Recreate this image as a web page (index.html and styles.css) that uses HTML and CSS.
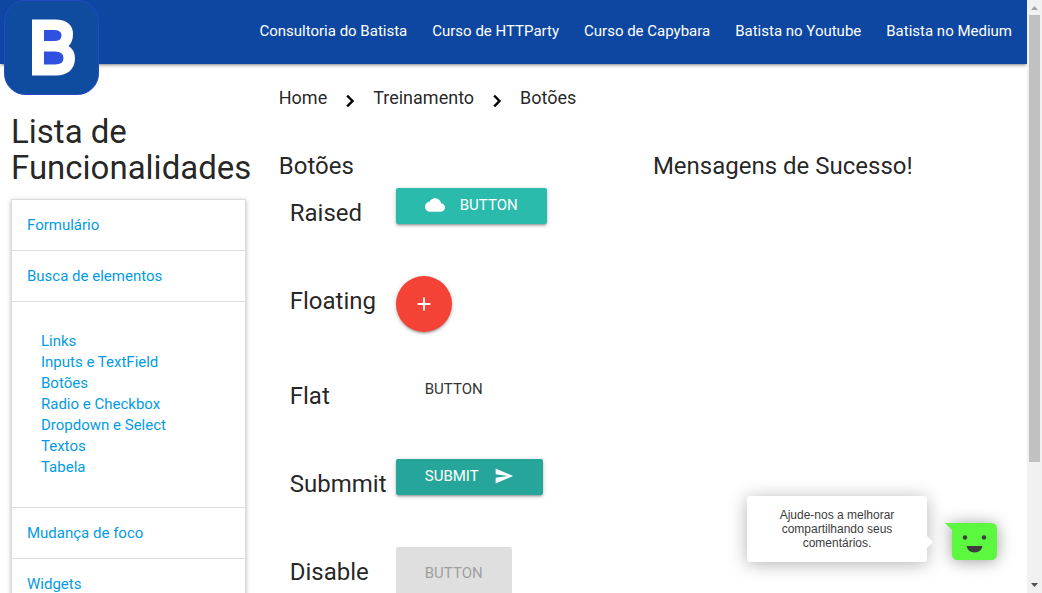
FILE: index.html
```html
<!DOCTYPE html>
<html lang="pt-BR">
<head>
<meta charset="utf-8">
<title>Botões</title>
<link rel="stylesheet" href="styles.css">
</head>
<body>
<div class="page">
  <nav class="navbar">
    <a class="brand" href="#" aria-label="Batista">
      <svg viewBox="0 0 95 95" width="95" height="95" aria-hidden="true">
        <rect x=".5" y=".5" width="94" height="94" rx="21" fill="#0f4c9f" stroke="#2449c9"/>
        <path fill="#fff" d="M28 19.500H51C63 19.500 69 25 69 34Q69 42 64.500 46Q71 50 71 58C71 69 64 75.500 52 75.500H28Z"/>
        <path fill="#3050e0" d="M40 30H50Q57.500 30 57.500 35.500T50 41H40ZM40 51.500H51Q59.500 51.500 59.500 58T51 64.500H40Z"/>
      </svg>
    </a>
    <ul class="nav-links">
      <li><a href="#">Consultoria do Batista</a></li>
      <li><a href="#">Curso de HTTParty</a></li>
      <li><a href="#">Curso de Capybara</a></li>
      <li><a href="#">Batista no Youtube</a></li>
      <li><a href="#">Batista no Medium</a></li>
    </ul>
  </nav>
  <div class="columns">
    <aside class="sidebar">
      <h1 class="sidebar-title">Lista de Funcionalidades</h1>
      <ul class="menu">
        <li><a class="menu-head" href="#">Formulário</a></li>
        <li><a class="menu-head" href="#">Busca de elementos</a>
          <ul class="submenu">
            <li><a href="#">Links</a></li>
            <li><a href="#">Inputs e TextField</a></li>
            <li><a href="#">Botões</a></li>
            <li><a href="#">Radio e Checkbox</a></li>
            <li><a href="#">Dropdown e Select</a></li>
            <li><a href="#">Textos</a></li>
            <li><a href="#">Tabela</a></li>
          </ul>
        </li>
        <li><a class="menu-head" href="#">Mudança de foco</a></li>
        <li><a class="menu-head" href="#">Widgets</a></li>
      </ul>
    </aside>
    <main class="content">
      <div class="crumbs">
        <a href="#">Home</a>
        <svg class="chevron" viewBox="0 0 24 24" aria-hidden="true"><path d="M10 6L8.590 7.410 13.170 12l-4.580 4.590L10 18l6-6z"/></svg>
        <a href="#">Treinamento</a>
        <svg class="chevron" viewBox="0 0 24 24" aria-hidden="true"><path d="M10 6L8.590 7.410 13.170 12l-4.580 4.590L10 18l6-6z"/></svg>
        <a href="#">Botões</a>
      </div>
      <div class="panels">
        <section>
          <h2 class="heading">Botões</h2>
          <div class="demo">
            <h3 class="label">Raised</h3>
            <button class="btn raised" type="button"><svg class="icon" viewBox="0 0 24 24" aria-hidden="true"><path d="M19.350 10.040C18.670 6.590 15.640 4 12 4 9.110 4 6.600 5.640 5.350 8.040 2.340 8.360 0 10.910 0 14c0 3.310 2.690 6 6 6h13c2.760 0 5-2.240 5-5 0-2.640-2.050-4.780-4.650-4.960z"/></svg>BUTTON</button>
          </div>
          <div class="demo">
            <h3 class="label">Floating</h3>
            <button class="floating" type="button" aria-label="Adicionar"><svg viewBox="0 0 24 24" aria-hidden="true"><path d="M19 13h-6v6h-2v-6H5v-2h6V5h2v6h6v2z"/></svg></button>
          </div>
          <div class="demo">
            <h3 class="label">Flat</h3>
            <button class="btn flat" type="button">BUTTON</button>
          </div>
          <div class="demo">
            <h3 class="label">Submmit</h3>
            <button class="btn submit" type="submit">SUBMIT<svg class="icon" viewBox="0 0 24 24" aria-hidden="true"><path d="M2.010 21L23 12 2.010 3 2 10l15 2-15 2z"/></svg></button>
          </div>
          <div class="demo">
            <h3 class="label">Disable</h3>
            <button class="btn large" type="button" disabled>BUTTON</button>
          </div>
        </section>
        <section>
          <h2 class="heading">Mensagens de Sucesso!</h2>
        </section>
      </div>
    </main>
  </div>
  <div class="feedback">
    <div class="bubble">Ajude-nos a melhorar compartilhando seus comentários.</div>
    <button class="face" type="button" aria-label="Comentários">
      <svg viewBox="0 0 52 38" width="52" height="38" aria-hidden="true">
        <path fill="#5cf73f" d="M0 0H46Q52 0 52 6V31Q52 37 46 37H13Q7 37 7 31V7Z"/>
        <circle cx="20" cy="14.500" r="2.200" fill="#3c3c3c"/><circle cx="39" cy="14.500" r="2.200" fill="#3c3c3c"/>
        <path fill="#3c3c3c" d="M21.500 23H37.500Q36 29.500 29.500 29.500T21.500 23Z"/>
      </svg>
    </button>
  </div>
</div>
<div class="scrollbar" aria-hidden="true">
  <svg viewBox="0 0 15 15" width="15" height="15"><path fill="#a3a3a3" d="M4 10H11L7.500 6Z"/></svg>
  <div class="track"><div class="thumb"></div></div>
  <svg viewBox="0 0 15 15" width="15" height="15"><path fill="#505050" d="M4 5H11L7.500 9Z"/></svg>
</div>
</body>
</html>
```
FILE: styles.css
```css
* { box-sizing: border-box; }
body {
  margin: 0;
  display: flex;
  height: 100vh;
  overflow: hidden;
  font: 15px/21px Roboto, sans-serif;
  color: rgba(0, 0, 0, 0.87);
  background: #fff;
}
a { color: inherit; text-decoration: none; }
ul { list-style: none; margin: 0; padding: 0; }
h1, h2, h3 { margin: 0; font-weight: 400; }
button { font: inherit; border: 0; margin: 0; cursor: pointer; }
.page { flex: 1; min-width: 0; position: relative; overflow: hidden; }

.navbar {
  height: 64px;
  display: flex;
  justify-content: space-between;
  align-items: flex-start;
  padding: 0 15px 0 4px;
  background: #0d47a1;
  color: #fff;
  box-shadow: 0 2px 2px rgba(0, 0, 0, 0.14), 0 3px 1px -2px rgba(0, 0, 0, 0.12), 0 1px 5px rgba(0, 0, 0, 0.2);
}
.brand svg { display: block; }
.nav-links { display: flex; gap: 25px; }
.nav-links a { display: block; line-height: 62px; }

.columns { display: grid; grid-template-columns: minmax(0, 1fr) minmax(0, 3fr); }
.sidebar { padding: 50px 11px 0; }
.sidebar-title { font-size: 33px; line-height: 36px; margin-bottom: 13px; }
.menu {
  border: 1px solid #ddd;
  border-bottom: 0;
  color: #039be5;
  box-shadow: 0 2px 2px rgba(0, 0, 0, 0.14), 0 3px 1px -2px rgba(0, 0, 0, 0.12), 0 1px 5px rgba(0, 0, 0, 0.2);
}
.menu-head { display: block; padding: 15px 15px 14px; border-bottom: 1px solid #ddd; }
.submenu { padding: 29px; border-bottom: 1px solid #ddd; }

.content { padding: 0 0 0 22px; }
.crumbs { display: flex; height: 68px; padding-bottom: 2px; align-items: center; font-size: 18px; }
.chevron { width: 24px; margin: 8px 11px 0; stroke: currentColor; stroke-width: 0.5; }
.panels { display: grid; grid-template-columns: 1fr 1fr; }
.heading { font-size: 24px; line-height: 26px; padding-top: 21px; margin-bottom: 9px; }
.demo { display: flex; align-items: flex-start; padding-left: 11px; margin-bottom: 38px; }
.label { width: 106px; padding: 12px 0; font-size: 24px; line-height: 26px; }

.btn {
  height: 36px;
  padding: 0 29px 2px;
  border-radius: 2px;
  display: flex;
  align-items: center;
  gap: 15px;
  color: #fff;
}
.icon { width: 20px; fill: currentColor; }
.raised { background: #2bbbad; }
.submit { background: #26a69a; }
.raised, .submit, .floating {
  box-shadow: 0 2px 2px rgba(0, 0, 0, 0.14), 0 3px 1px -2px rgba(0, 0, 0, 0.12), 0 1px 5px rgba(0, 0, 0, 0.2);
}
.flat { background: transparent; color: #343434; padding-bottom: 0; }
.large { height: 54px; background: #dfdfdf; color: #9f9f9f; }
.floating {
  width: 56px;
  height: 56px;
  padding: 0;
  margin-bottom: 1px;
  border-radius: 50%;
  background: #f44336;
}
.floating svg { display: block; width: 22px; margin: 0 auto; fill: #fff; }

.feedback { position: absolute; right: 30px; bottom: 31px; display: flex; align-items: flex-end; gap: 18px; }
.bubble {
  position: relative;
  width: 180px;
  padding: 12px 24px;
  border-radius: 3px;
  background: #fff;
  color: #3c3c3c;
  font: 12px/14px "Liberation Sans", sans-serif;
  text-align: center;
  box-shadow: 0 2px 18px rgba(0, 0, 0, 0.3);
}
.bubble::after {
  content: "";
  position: absolute;
  left: 100%;
  bottom: 14px;
  border: 6px solid transparent;
  border-left-color: #fff;
  border-right: 0;
}
.face { padding: 0 0 1px; background: none; }
.face svg { display: block; overflow: visible; filter: drop-shadow(0 1px 8px rgba(0, 0, 0, 0.4)); }

.scrollbar { width: 15px; display: flex; flex-direction: column; background: #f1f1f1; }
.scrollbar svg { display: block; }
.track { flex: 1; padding: 0 2px; }
.thumb { height: 79.4%; background: #c1c1c1; }
```
